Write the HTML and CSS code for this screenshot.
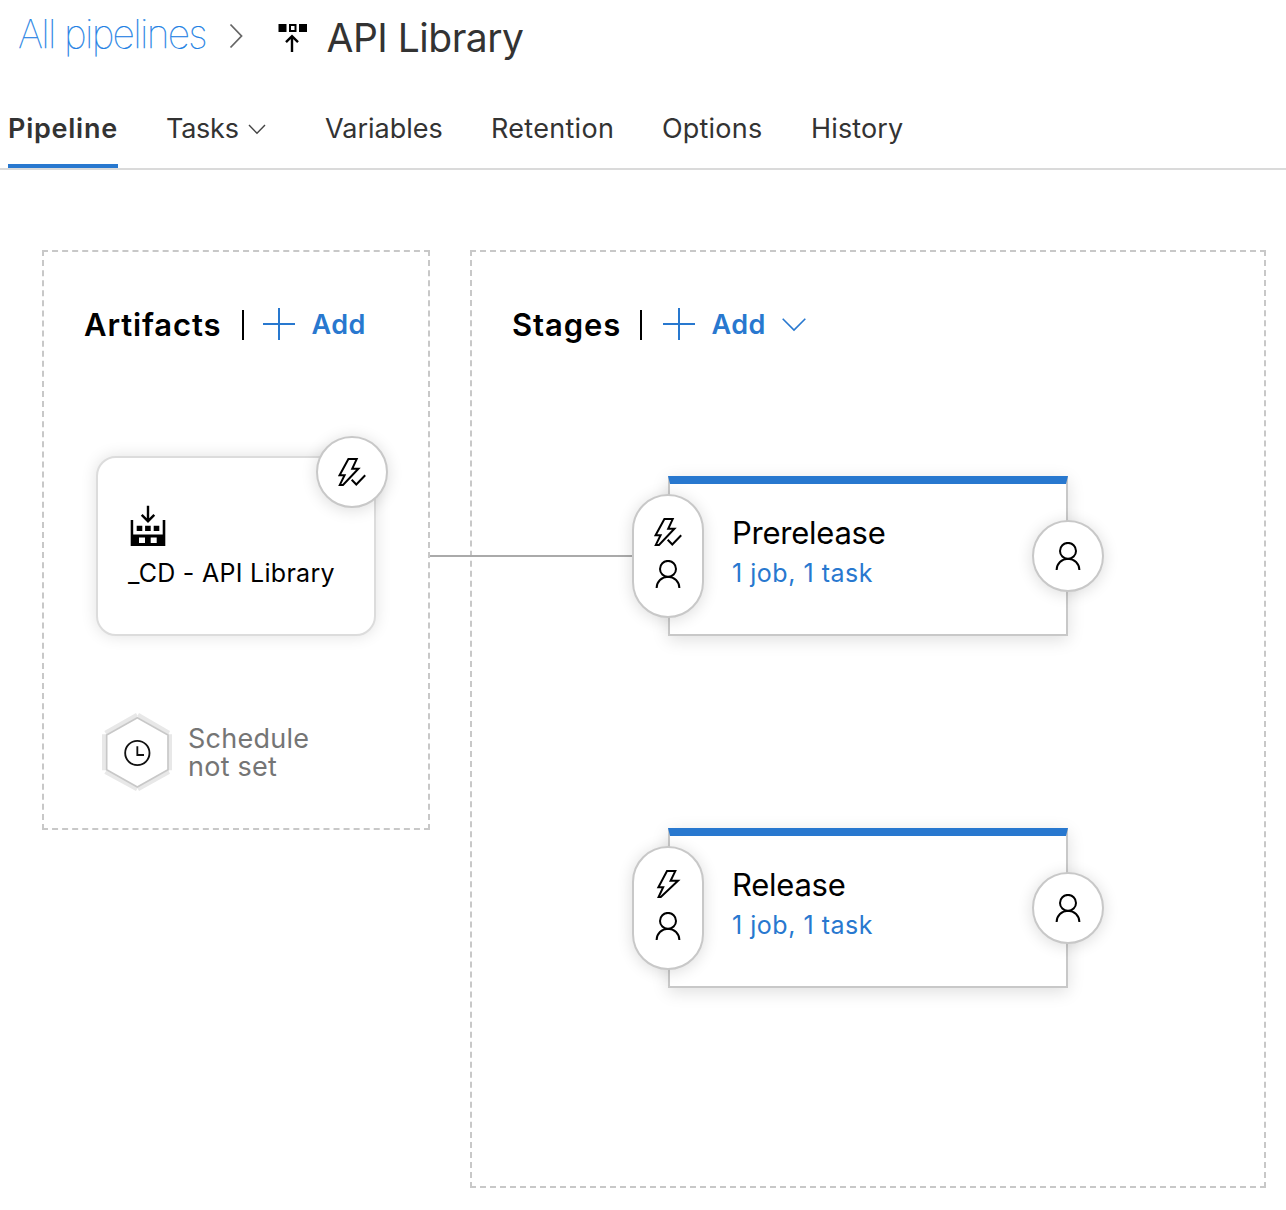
FILE: index.html
```html
<!DOCTYPE html>
<html lang="en">
<head>
<meta charset="utf-8">
<title>API Library</title>
<link rel="stylesheet" href="styles.css">
</head>
<body>
<svg class="defs" aria-hidden="true">
  <symbol id="bolt" viewBox="0 0 28 28"><path d="M13 1.1H21.3L16.6 10.8H24L6.8 26.9H4.6L9.2 17.2H4.4Z"/></symbol>
  <symbol id="bolt-check" viewBox="0 0 28 28"><path d="M10.4 1.1H18.7L14.2 10.8H20.4L5 26.9H1.8L6.6 17.2H1.6ZM13.7 21.7L18.3 26.5L27.2 17.3"/></symbol>
  <symbol id="person" viewBox="0 0 28 28"><circle cx="14" cy="8.9" r="8"/><path d="M2.6 28A11.4 11.2 0 0 1 25.4 28"/></symbol>
  <symbol id="plus" viewBox="0 0 32 32"><path d="M16 0V32M0 16H32"/></symbol>
</svg>

<header class="header">
  <nav class="breadcrumb">
    <a class="crumb">All pipelines</a>
    <svg class="crumb-arrow" viewBox="0 0 14 26"><path d="M1.5 1.5L12.5 13L1.5 24.5"/></svg>
    <svg class="release-icon" viewBox="0 0 29 29"><path d="M.5 0H8.5V8H.5ZM21 0H29V8H21ZM11 0H18.5V8H11ZM13 2V6H16.5V2Z" fill-rule="evenodd"/><path class="stroke" d="M14 28V12.5M8 18.2L14 12.2L20 18.2"/></svg>
    <h1 class="title">API Library</h1>
  </nav>
  <nav class="tabs">
    <a class="tab tab-active">Pipeline</a>
    <a class="tab tab-tasks">Tasks<svg class="tab-arrow" viewBox="0 0 18 11"><path d="M1 1L9 9.3L17 1"/></svg></a>
    <a class="tab tab-variables">Variables</a>
    <a class="tab tab-retention">Retention</a>
    <a class="tab tab-options">Options</a>
    <a class="tab tab-history">History</a>
  </nav>
</header>

<main class="canvas">
  <section class="panel artifacts">
    <div class="panel-head">
      <h2 class="panel-title">Artifacts</h2>
      <span class="divider"></span>
      <a class="add"><svg class="plus"><use href="#plus"/></svg><span class="add-label">Add</span></a>
    </div>
    <div class="artifact">
      <svg class="build-icon" viewBox="0 0 36 41"><path d="M.7 15H3.2V29.5H32.7V15H35.3V41H.7ZM9 32.5V38H15V32.5ZM20.7 32.5V38H26.7V32.5Z" fill-rule="evenodd"/><path d="M6.7 20.7h5.6v5.4H6.7ZM15.1 20.7h5.6v5.4h-5.6ZM23.7 20.7h5.6v5.4h-5.6Z"/><path class="stroke" d="M18 .7V16M11.7 9.8L18 16.2L24.3 9.8"/></svg>
      <span class="artifact-name">_CD - API Library</span>
      <span class="badge artifact-trigger"><svg class="glyph"><use href="#bolt-check"/></svg></span>
    </div>
    <div class="schedule">
      <svg class="hexagon" viewBox="36 38 210 234">
        <g fill="#e8e8e8"><path d="M36 102H48V210H36ZM234 102H246V210H234ZM43 92L138 38L144 49L50 103ZM240 92L147 38L141 49L235 103ZM43 220L138 272L144 261L50 209ZM240 220L147 272L141 261L235 209Z"/></g>
        <path d="M142 52L234 104V208L142 260L50 208V104Z" fill="#fff" stroke="#c8c8c8" stroke-width="5"/>
        <circle cx="142" cy="158" r="36.5" fill="none" stroke="#111" stroke-width="5.5"/>
        <path d="M142 138V164H162" fill="none" stroke="#111" stroke-width="5.5"/>
      </svg>
      <span class="schedule-label">Schedule<br>not set</span>
    </div>
  </section>

  <section class="panel stages">
    <div class="panel-head">
      <h2 class="panel-title stages-title">Stages</h2>
      <span class="divider"></span>
      <a class="add"><svg class="plus"><use href="#plus"/></svg><span class="add-label">Add</span><svg class="add-arrow" viewBox="0 0 24 13"><path d="M.7 .8L12 12L23.3 .8"/></svg></a>
    </div>
    <div class="stage-list">
      <article class="stage">
        <span class="connector"></span>
        <span class="pill"><svg class="glyph"><use href="#bolt-check"/></svg><svg class="glyph"><use href="#person"/></svg></span>
        <span class="stage-name">Prerelease</span>
        <a class="stage-tasks">1 job, 1 task</a>
        <span class="badge approval"><svg class="glyph"><use href="#person"/></svg></span>
      </article>
      <article class="stage">
        <span class="pill"><svg class="glyph"><use href="#bolt"/></svg><svg class="glyph"><use href="#person"/></svg></span>
        <span class="stage-name">Release</span>
        <a class="stage-tasks">1 job, 1 task</a>
        <span class="badge approval"><svg class="glyph"><use href="#person"/></svg></span>
      </article>
    </div>
  </section>
</main>
</body>
</html>
```
FILE: styles.css
```css
* { box-sizing: border-box; }
body { margin: 0; background: #fff; color: #000; font-family: Inter, "Liberation Sans", sans-serif; }
h1, h2 { margin: 0; }
svg { display: block; flex: none; fill: none; overflow: visible; }
.defs { position: absolute; width: 0; height: 0; }

.header { height: 170px; border-bottom: 2px solid #dadada; display: flex; flex-direction: column; }
.breadcrumb { height: 88px; padding-left: 18px; display: flex; align-items: flex-start; }
.crumb { width: 211px; padding-top: 10px; color: #2080e4; font-size: 39px; font-weight: 100; letter-spacing: -1.7px; line-height: 48px; white-space: nowrap; -webkit-text-stroke: .25px #2080e4; }
.crumb-arrow { width: 14px; height: 26px; margin-top: 23px; stroke: #666; stroke-width: 1.8; }
.release-icon { width: 29px; height: 29px; margin: 24px 0 0 35px; fill: #000; }
.stroke { fill: none; stroke: #000; stroke-width: 2.4; }
.title { margin-left: 19.5px; padding-top: 14px; color: #333; font-size: 39px; font-weight: 400; letter-spacing: -.5px; line-height: 48px; white-space: nowrap; }

.tabs { height: 80px; padding-left: 8px; display: flex; }
.tab { height: 80px; padding-top: 24px; display: flex; color: #333; font-size: 27px; line-height: 34px; white-space: nowrap; }
.tab-active { width: 110px; font-weight: 600; letter-spacing: .75px; border-bottom: 4px solid #2878cf; }
.tab-tasks { width: 159px; margin-left: 48px; letter-spacing: -.25px; }
.tab-arrow { width: 18px; height: 11px; margin: 12px 0 0 9.5px; stroke: #444; stroke-width: 1.4; }
.tab-variables { width: 166px; }
.tab-retention { width: 171px; letter-spacing: .3px; }
.tab-options { width: 149px; letter-spacing: .2px; }
.tab-history { letter-spacing: .15px; }

.canvas { padding: 80px 20px 22px 42px; display: flex; align-items: flex-start; gap: 40px; }
.panel { border: 2px dashed #c8c8c8; }
.artifacts { width: 388px; height: 580px; }
.stages { width: 796px; height: 938px; }
.panel-head { height: 60px; margin-top: 42px; padding-left: 40px; display: flex; align-items: center; }
.panel-title { width: 158px; padding-top: 2px; font-size: 31px; font-weight: 600; letter-spacing: .87px; line-height: 40px; white-space: nowrap; }
.stages-title { width: 128px; }
.divider { width: 2px; height: 30px; margin-top: 2px; background: #000; }
.add { margin-left: 19px; display: flex; align-items: center; color: #2878cf; font-size: 27px; font-weight: 600; letter-spacing: .5px; line-height: 34px; }
.stages .add { margin-left: 21px; }
.plus { width: 32px; height: 32px; stroke: #2878cf; stroke-width: 2; }
.add-label { width: 54px; margin-left: 16.5px; padding-top: 2px; white-space: nowrap; }
.add-arrow { width: 24px; height: 13px; margin-left: 16px; stroke: #2878cf; stroke-width: 1.6; }

.artifact { position: relative; width: 280px; height: 180px; margin: 102px 0 0 52px; padding: 47px 0 0 30px; border: 2px solid #dcdcdc; border-radius: 20px; background: #fff; box-shadow: 0 0 16px rgba(0, 0, 0, .12); }
.build-icon { width: 36px; height: 41px; margin-left: 2px; fill: #000; }
.artifact-name { display: block; margin-top: 10px; font-size: 25px; letter-spacing: .28px; line-height: 34px; white-space: nowrap; }
.badge { position: absolute; width: 72px; height: 72px; display: flex; align-items: center; justify-content: center; border: 2px solid #c8c8c8; border-radius: 50%; background: #fff; box-shadow: 0 2px 16px rgba(0, 0, 0, .14); }
.artifact-trigger { top: -22px; right: -14px; }
.glyph { width: 28px; height: 28px; stroke: #000; stroke-width: 2; }
.schedule { margin: 77px 0 0 58px; display: flex; align-items: center; }
.hexagon { width: 70px; height: 78px; }
.schedule-label { margin-left: 16px; padding-top: 2px; color: #757575; font-size: 27px; letter-spacing: .25px; line-height: 28px; white-space: nowrap; }

.stage-list { padding: 122px 0 0 196px; display: flex; flex-direction: column; gap: 192px; }
.stage { position: relative; width: 400px; height: 160px; padding: 29px 0 0 62px; display: flex; flex-direction: column; border: 2px solid #c8c8c8; border-top: 8px solid #2878cf; background: #fff; box-shadow: 0 4px 16px rgba(0, 0, 0, .13); }
.connector { position: absolute; left: -240px; top: 71px; width: 204px; height: 2px; background: #aaa; }
.pill { position: absolute; left: -38px; top: 10px; width: 72px; height: 124px; padding-top: 22px; display: flex; flex-direction: column; align-items: center; gap: 14px; border: 2px solid #c8c8c8; border-radius: 36px; background: #fff; box-shadow: 0 2px 16px rgba(0, 0, 0, .14); }
.approval { top: 36px; right: -38px; }
.stage-name { font-size: 31px; letter-spacing: -.25px; line-height: 40px; white-space: nowrap; }
.stage-tasks { margin-top: 3px; color: #2878cf; font-size: 25px; letter-spacing: .52px; line-height: 34px; white-space: nowrap; }
```
